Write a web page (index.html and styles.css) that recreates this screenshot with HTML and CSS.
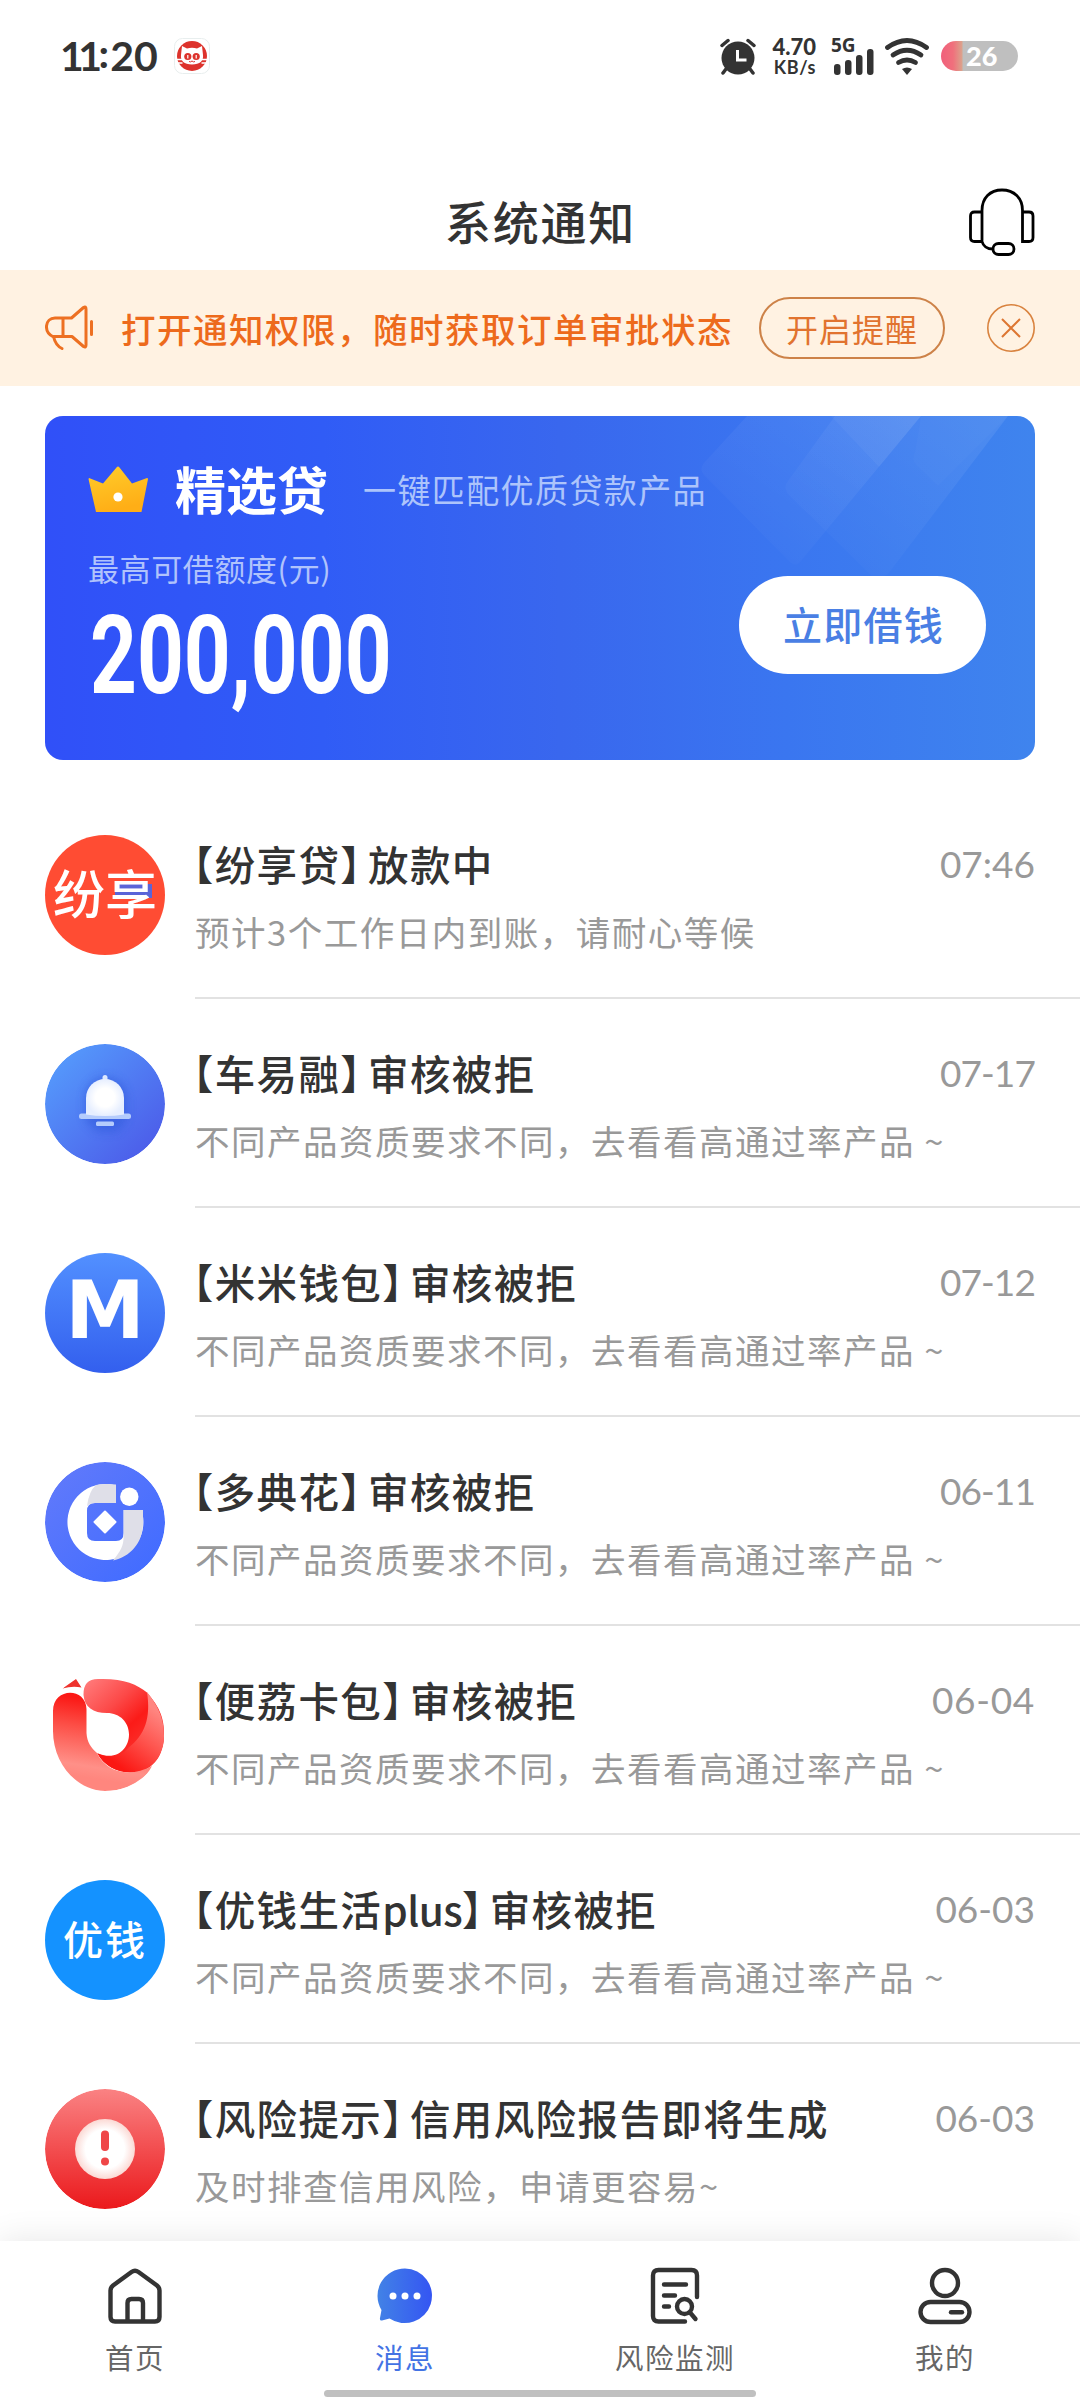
FILE: index.html
```html
<!DOCTYPE html>
<html lang="zh-CN">
<head>
<meta charset="utf-8">
<title>系统通知</title>
<link rel="stylesheet" href="styles.css">
</head>
<body>
<div class="screen">
  <header class="status">
    <div class="clock"><span class="ones">11</span><span class="colon">:</span>20</div>
    <svg class="app-badge" width="36" height="36" viewBox="0 0 36 36">
      <rect x=".5" y=".5" width="35" height="35" rx="8" fill="#fff" stroke="#e8eeee"/>
      <circle cx="18" cy="18" r="15" fill="#dd332c"/>
      <path d="M8 8l5 2.500q5-1.500 10 0L28 8l1 9q1 9-11 9.500Q6 26 7 17z" fill="#fff"/>
      <path d="M2 21.500h6M2.500 25h6M28 21.500h6M27.500 25h6" stroke="#fff" stroke-width="1.600"/>
      <circle cx="13.800" cy="18.500" r="3.600" fill="#dd332c"/><circle cx="22.200" cy="18.500" r="3.600" fill="#dd332c"/>
      <path d="M13.800 17v3.500M22.200 17v3.500" stroke="#fff" stroke-width="1.200"/>
      <path d="M15 23.500q1.500 1 3-.5 1.500 1.500 3 .5" fill="none" stroke="#dd332c"/>
    </svg>
    <div class="status-right">
      <svg width="36" height="37" viewBox="0 0 36 37">
        <circle cx="18" cy="20" r="16.500" fill="#333"/>
        <path d="M2 7.500l6-5M34 7.500l-6-5M6 31l-3 4M30 31l3 4" stroke="#333" stroke-width="3.500" stroke-linecap="round"/>
        <path d="M17.500 12v10h9" fill="none" stroke="#fff" stroke-width="3"/>
      </svg>
      <div class="speed"><b>4.70</b><span>KB/s</span></div>
      <div class="signal">
        <span>5G</span>
        <svg width="42" height="26" viewBox="0 0 42 26">
          <g fill="#333"><rect x="1" y="15" width="6.500" height="11" rx="3"/><rect x="12" y="11" width="6.500" height="15" rx="3"/><rect x="23" y="6" width="6.500" height="20" rx="3"/><rect x="34" y="0" width="6.500" height="26" rx="3"/></g>
        </svg>
      </div>
      <svg class="wifi" width="44" height="37" viewBox="0 0 44 37">
        <g fill="none" stroke="#333" stroke-width="4.800" stroke-linecap="round"><path d="M2.500 9.500Q22-4.500 41.500 9.500"/><path d="M8 17Q22 7.500 36 17"/><path d="M13.500 24.500Q22 19.500 30.500 24.500"/></g>
        <path d="M17 31q5-3 10 0l-5 6z" fill="#333"/>
      </svg>
      <div class="battery">26</div>
    </div>
  </header>

  <div class="titlebar">
    <h1>系统通知</h1>
    <svg class="headset" width="68" height="68" viewBox="0 0 68 68">
      <g fill="none" stroke="#000" stroke-width="2.800">
        <path d="M14 52.500V22.500C14 10 22 2 34 2s20.500 8 20.500 20.500v31H61q4 0 4-4V28q0-4-4-4h-6.500"/>
        <path d="M14 24H6.500q-4 0-4 4v21.500q0 4 4 4H14c1 4 5 7.500 11 7.500"/>
        <rect x="25" y="55.500" width="21" height="11" rx="5.500"/>
      </g>
    </svg>
  </div>

  <div class="notice">
    <svg width="50" height="48" viewBox="0 0 50 48">
      <path d="M8.500 33C-2 28 0 14 10 14h16.500L38.500 3.500Q41 2 41 5v36q0 3-2.500 1.500L27 32.500H8.500q2 9 8.500 12M18 14v18.500M46.500 17.500v13" fill="none" stroke="#ed7022" stroke-width="3" stroke-linecap="round" stroke-linejoin="round"/>
    </svg>
    <p>打开通知权限，随时获取订单审批状态</p>
    <button class="remind">开启提醒</button>
    <svg class="close" width="48" height="48" viewBox="0 0 48 48">
      <circle cx="24" cy="24" r="23.200" fill="none" stroke="#d9833f" stroke-width="1.600"/>
      <path d="M15 15l18 18M33 15L15 33" stroke="#dd7632" stroke-width="2"/>
    </svg>
  </div>

  <section class="card">
    <svg class="card-bg" width="990" height="344" viewBox="0 0 990 344">
      <defs>
        <linearGradient id="ray" x1="1" y1="0" x2="0" y2="1"><stop offset="0" stop-color="#fff" stop-opacity=".08"/><stop offset="1" stop-color="#fff" stop-opacity="0"/></linearGradient>
      </defs>
      <path d="M702 0h174L755 146q-4 5-10 0l-84-85q-8-7-2-14z" fill="url(#ray)"/>
      <path d="M790 0h173L843 158l-12 6-86-84q-8-8-2-15z" fill="url(#ray)"/>
      <path d="M786 0h90l-42 51z" fill="#fff" opacity=".04"/>
      <path d="M876 0h87l-70 70-22-21q-5-6-1-13z" fill="#fff" opacity=".02"/>
    </svg>
    <div class="card-head">
      <svg width="60" height="46" viewBox="0 0 60 46">
        <defs><linearGradient id="gold" x1="0" y1="0" x2=".3" y2="1"><stop offset="0" stop-color="#ffcd2b"/><stop offset="1" stop-color="#ffae16"/></linearGradient></defs>
        <path d="M1 12l14 5.500L28.500 1.500q1.500-2 3 0L44 17.500 59 12q1 0 1 1l-6.500 33H8L.5 13z" fill="url(#gold)"/>
        <circle cx="30" cy="31" r="4.600" fill="#fff"/>
      </svg>
      <h2>精选贷</h2>
      <span>一键匹配优质贷款产品</span>
    </div>
    <div class="card-body">
      <div class="quota"><p>最高可借额度(元)</p><strong>200,000</strong></div>
      <button class="borrow">立即借钱</button>
    </div>
  </section>

  <ul class="list">
    <li>
      <div class="avatar fenxiang"><i></i><span>纷享</span></div>
      <div class="msg"><div class="line"><h3>【纷享贷<em>】</em>放款中</h3><time>07:46</time></div><p>预计3个工作日内到账，请耐心等候</p></div>
    </li>
    <li>
      <svg class="avatar" viewBox="0 0 120 120">
        <defs>
          <linearGradient id="bellbg" x1=".1" y1=".1" x2=".9" y2=".9"><stop offset="0" stop-color="#559afc"/><stop offset="1" stop-color="#4c5ce9"/></linearGradient>
          <radialGradient id="bell"><stop offset=".5" stop-color="#fff"/><stop offset="1" stop-color="#e6eeff"/></radialGradient>
          <filter id="soft" x="-50%" y="-50%" width="200%" height="200%"><feGaussianBlur stdDeviation="4"/></filter>
        </defs>
        <circle cx="60" cy="60" r="60" fill="url(#bellbg)"/>
        <path d="M40 76V54a21 21 0 0 1 42 0v22l-10 12H52z" fill="#315cdc" opacity=".6" filter="url(#soft)"/>
        <rect x="57.500" y="31" width="5" height="9" rx="2.500" fill="#dce8ff"/>
        <rect x="34" y="69.500" width="52" height="5.500" rx="2.500" fill="#b5ccfc"/>
        <path d="M41 70.500V54a19 19 0 0 1 38 0v16.500q-19 3-38 0z" fill="url(#bell)"/>
        <rect x="51" y="77.500" width="18" height="4.500" rx="1.500" fill="#b5ccfc"/>
      </svg>
      <div class="msg"><div class="line"><h3>【车易融<em>】</em>审核被拒</h3><time class="narrow">07-17</time></div><p>不同产品资质要求不同，去看看高通过率产品 ~</p></div>
    </li>
    <li>
      <div class="avatar mimi">M</div>
      <div class="msg"><div class="line"><h3>【米米钱包<em>】</em>审核被拒</h3><time class="narrow">07-12</time></div><p>不同产品资质要求不同，去看看高通过率产品 ~</p></div>
    </li>
    <li>
      <svg class="avatar" viewBox="0 0 120 120">
        <defs><linearGradient id="dian" x1=".1" y1=".1" x2=".9" y2=".9"><stop offset="0" stop-color="#5f79fb"/><stop offset="1" stop-color="#426cff"/></linearGradient></defs>
        <circle cx="60" cy="60" r="60" fill="url(#dian)"/>
        <path d="M71 23.500V41H50q-8 0-8 8v22q0 8 8 8h21q7.600 0 7.600-8V48H96.500A38 38 0 1 1 71 23.500z" fill="#fff"/>
        <path d="M71 22.500V41H50q-5 0-8 3 2-15 9-21 8-1.500 20-.5z" fill="#dfdfe8"/>
        <path d="M78.600 48H98v13c0 20-13 34-30 37.500 8-10 10.600-15 10.600-24z" fill="#dfdfe8"/>
        <circle cx="84.300" cy="34.700" r="9.200" fill="#fff"/>
        <path d="M60 49.500L70.500 60 60 70.500 49.500 60z" fill="#fff" stroke="#fff" stroke-width="2" stroke-linejoin="round"/>
      </svg>
      <div class="msg"><div class="line"><h3>【多典花<em>】</em>审核被拒</h3><time class="narrow">06-11</time></div><p>不同产品资质要求不同，去看看高通过率产品 ~</p></div>
    </li>
    <li>
      <svg class="avatar" viewBox="0 0 120 120">
        <defs>
          <linearGradient id="li1" gradientUnits="userSpaceOnUse" x1="45" y1="10" x2="95" y2="65"><stop offset="0" stop-color="#ff7777"/><stop offset=".45" stop-color="#fc4948"/><stop offset=".8" stop-color="#fb1b18"/><stop offset="1" stop-color="#fb2824"/></linearGradient>
          <linearGradient id="li2" gradientUnits="userSpaceOnUse" x1="42" y1="28" x2="30" y2="105"><stop offset="0" stop-color="#fb1815"/><stop offset=".35" stop-color="#fc4d45"/><stop offset=".85" stop-color="#ff9088"/><stop offset="1" stop-color="#ff867e"/></linearGradient>
          <linearGradient id="li3" gradientUnits="userSpaceOnUse" x1="118" y1="45" x2="78" y2="98"><stop offset="0" stop-color="#ff8580"/><stop offset=".45" stop-color="#fe5650"/><stop offset="1" stop-color="#fb1713"/></linearGradient>
        </defs>
        <path d="M17.500 17.500L31 8l5.500 8.500q-9-2-19 1z" fill="#ee332e"/>
        <path d="M38.500 24Q38 8 53 8c24-1 39 5 49 13.500 10 12 18 23 17 44 0 20-14 36-31 36-16 1-30-8-35-19 20 8 31-6 31-19 0-12-9-21.500-22-21.500C48 42 39.500 36 38.500 24z" fill="url(#li1)"/>
        <path d="M102 21c10 13 17 24 17 44 0 13-4 22-12 29-14 12-43 10-55-12 10 6 24 4 31-5 17-13 23-30 19-56z" fill="url(#li3)"/>
        <path d="M8 40c0-24 33-24 33.500-2v24c.5 9 4.500 15 10.500 20 8 18 32 26 55 13-8 16-26 25-47 25C30 119 8 91 8 60z" fill="url(#li2)"/>
      </svg>
      <div class="msg"><div class="line"><h3>【便荔卡包<em>】</em>审核被拒</h3><time class="wide">06-04</time></div><p>不同产品资质要求不同，去看看高通过率产品 ~</p></div>
    </li>
    <li>
      <div class="avatar youqian">优钱</div>
      <div class="msg"><div class="line"><h3>【优钱生活<b>plus</b><em>】</em>审核被拒</h3><time>06-03</time></div><p>不同产品资质要求不同，去看看高通过率产品 ~</p></div>
    </li>
    <li>
      <svg class="avatar" viewBox="0 0 120 120">
        <defs>
          <linearGradient id="risk" x1="0" y1="0" x2="0" y2="1"><stop offset="0" stop-color="#fa8283"/><stop offset="1" stop-color="#eb191c"/></linearGradient>
          <radialGradient id="disc"><stop offset=".65" stop-color="#fff"/><stop offset="1" stop-color="#fbd9d4"/></radialGradient>
        </defs>
        <circle cx="60" cy="60" r="60" fill="url(#risk)"/>
        <circle cx="60" cy="60" r="30" fill="url(#disc)"/>
        <rect x="56" y="41.500" width="8" height="20.500" rx="4" fill="#ef4648"/>
        <circle cx="60" cy="72.400" r="4" fill="#ef4648"/>
      </svg>
      <div class="msg"><div class="line"><h3>【风险提示<em>】</em>信用风险报告即将生成</h3><time>06-03</time></div><p>及时排查信用风险，申请更容易~</p></div>
    </li>
  </ul>

  <nav class="tabs">
    <div class="tab">
      <svg width="60" height="60" viewBox="0 0 60 60"><g fill="none" stroke="#333" stroke-width="4.400" stroke-linejoin="round"><path d="M5.500 24.500q0-3 2.500-5L26.500 6q3.500-2.500 7 0L52 19.500q2.500 2 2.500 5V51q0 4.500-4.500 4.500H10q-4.500 0-4.500-4.500z"/><path d="M22.500 55V37q0-4 4-4h7.500q4 0 4 4v18"/></g></svg>
      <span>首页</span>
    </div>
    <div class="tab active">
      <svg width="60" height="60" viewBox="0 0 60 60"><defs><linearGradient id="chat"><stop offset="0" stop-color="#4282e6"/><stop offset="1" stop-color="#3455f3"/></linearGradient></defs><path d="M30 2.500a27.300 27.300 0 1 1-15.500 50l-7.500 2q-2.500.5-2-2.500L6.500 44A27.300 27.300 0 0 1 30 2.500z" fill="url(#chat)"/><g fill="#fff"><circle cx="18" cy="30" r="3.500"/><circle cx="30" cy="30" r="3.500"/><circle cx="42" cy="30" r="3.500"/></g></svg>
      <span>消息</span>
    </div>
    <div class="tab">
      <svg width="60" height="60" viewBox="0 0 60 60"><g fill="none" stroke="#333" stroke-width="4.400" stroke-linecap="round"><path d="M40 55.500H13.500q-5.500 0-5.500-5.500V9.500Q8 4 13.500 4h33Q52 4 52 9.500V31M19 18.500h22M19 29.500h11M19 40.500h5"/><circle cx="39.500" cy="40.500" r="7.500"/><path d="M45 46.500l5.500 6.500"/></g></svg>
      <span>风险监测</span>
    </div>
    <div class="tab">
      <svg width="60" height="60" viewBox="0 0 60 60"><g fill="none" stroke="#333" stroke-width="4.400"><circle cx="30" cy="17" r="13"/><rect x="5.500" y="36" width="49" height="20" rx="10"/><path d="M36 46.200h11" stroke-linecap="round"/></g></svg>
      <span>我的</span>
    </div>
  </nav>
  <div class="gesture"></div>
</div>
</body>
</html>
```
FILE: styles.css
```css
* { box-sizing: border-box; margin: 0; padding: 0; }
body {
  background: #fff;
  font-family: "Noto Sans CJK SC", sans-serif;
  color: #333;
}
.screen {
  position: relative;
  width: 1080px;
  height: 2400px;
  overflow: hidden;
  display: flex;
  flex-direction: column;
  background: #fff;
}
svg { display: block; flex: none; }
button { font-family: inherit; background: none; border: 0; white-space: nowrap; }

/* status bar */
.status {
  height: 112px;
  padding: 0 62px 0 60px;
  display: flex;
  align-items: center;
}
.clock { font: 700 41px/60px Lato, sans-serif; white-space: nowrap; width: 114px; }
.ones { letter-spacing: -5.500px; }
.colon { position: relative; top: -3px; margin: 0 1px 0 2px; }
.status-right { margin-left: auto; display: flex; align-items: center; color: #333; }
.speed {
  width: 48px;
  margin-left: 12px;
  display: flex;
  flex-direction: column;
  align-items: flex-end;
  font: 700 18px/18px Lato, sans-serif;
  letter-spacing: .6px;
}
.speed b { font-size: 22px; font-weight: 900; line-height: 22px; letter-spacing: 0; }
.signal { width: 42px; margin-left: 17px; height: 37px; position: relative; display: flex; align-items: flex-end; }
.signal span { position: absolute; left: -2px; top: -3px; font: 700 19px/20px "Noto Sans", sans-serif; }
.wifi { margin-left: 10px; }
.battery {
  width: 77px;
  height: 30px;
  margin-left: 12px;
  border-radius: 15px;
  background: linear-gradient(90deg, #f0607c 0, #f0707c 12px, #dba28c 21px, #bfbfbf 22px);
  color: #fff;
  font: 900 27px/30px Lato, sans-serif;
  padding-left: 25px;
}

/* title */
.titlebar {
  height: 158px;
  padding: 0 44px 0 45px;
  display: grid;
  grid-template-columns: 68px 1fr 68px;
  align-items: end;
}
.titlebar h1 {
  grid-column: 2;
  text-align: center;
  font-size: 46px;
  font-weight: 500;
  line-height: 60px;
  letter-spacing: 1.700px;
  padding-bottom: 20px;
}
.headset { margin-bottom: 14px; }

/* permission notice */
.notice {
  height: 116px;
  padding: 0 45px;
  display: flex;
  align-items: center;
  background: #fff2e2;
  color: #ed6a1c;
}
.notice p { width: 614px; margin-left: 26px; font-size: 34.500px; font-weight: 500; letter-spacing: 1.500px; white-space: nowrap; line-height: 50px; }
.remind {
  width: 186px;
  height: 62px;
  margin-left: 24px;
  border: 2px solid #cd8248;
  border-radius: 31px;
  color: #e1732f;
  font-size: 32px;
  letter-spacing: 1px;
  line-height: 56px;
}
.close { margin-left: auto; }

/* promo card */
.card {
  position: relative;
  height: 344px;
  margin: 30px 45px 0;
  padding: 40px 49px 0 43px;
  border-radius: 18px;
  overflow: hidden;
  background: linear-gradient(90deg, #3050f8 0%, #305cf6 28%, #3967ee 52%, #3a76f0 75%, #3f84ee 100%);
  color: #fff;
}
.card-bg { position: absolute; left: 0; top: 0; }
.card-head { position: relative; height: 66px; display: flex; align-items: center; }
.card-head h2 { font-size: 51px; font-weight: 700; line-height: 66px; margin-left: 27px; padding-bottom: 3px; }
.card-head span { margin-left: 35px; font-size: 33px; letter-spacing: 1.400px; color: #adc4fb; line-height: 50px; }
.card-body { position: relative; display: flex; justify-content: space-between; }
.quota p { font-size: 31px; letter-spacing: .6px; line-height: 44px; margin-top: 24px; color: #b0c3fc; }
.quota strong {
  display: block;
  font: 700 109px/100px Roboto, sans-serif;
  transform: scaleX(.75);
  transform-origin: left;
  width: 300px;
  margin: 16px 0 0 2px;
}
.borrow {
  width: 247px;
  height: 98px;
  margin-top: 54px;
  border-radius: 49px;
  background: #fff;
  color: #4a7fe4;
  font-size: 39px;
  font-weight: 500;
  letter-spacing: 1.200px;
  padding: 0 0 5px 2px;
}

/* message list */
.list { list-style: none; padding-top: 30px; }
.list li { height: 209px; padding-left: 45px; display: flex; gap: 30px; }
.avatar { width: 120px; height: 120px; margin-top: 45px; border-radius: 50%; flex: none; color: #fff; text-align: center; white-space: nowrap; }
.msg { flex: 1; padding: 46px 45px 0 0; border-bottom: 2px solid #e2e2e2; }
.list li:last-child .msg { border: 0; }
.line { display: flex; justify-content: space-between; align-items: center; height: 56px; }
.line h3 { font-size: 40.500px; font-weight: 500; line-height: 56px; letter-spacing: 1.400px; margin-left: -2px; font-feature-settings: "halt"; white-space: nowrap; }
.line em { font-style: normal; margin-right: 6px; }
.line b { font-weight: 500; letter-spacing: -.6px; }
.line time { font: 400 37px/56px Lato, sans-serif; color: #999; }
.line .narrow { letter-spacing: -.9px; }
.line .wide { letter-spacing: .7px; }
.msg p { font-size: 34.500px; letter-spacing: 1.500px; line-height: 50px; margin-top: 14px; color: #999; white-space: nowrap; }

.fenxiang { position: relative; background: #ff4c33; font-size: 52px; font-weight: 500; line-height: 114px; }
.fenxiang span { position: relative; }
.fenxiang i { position: absolute; left: 70px; top: 49px; width: 37px; height: 14px; background: #5a64d8; }
.mimi { background: linear-gradient(#5290ff, #335fee); font: 700 80px/116px "DejaVu Sans", sans-serif; display: flex; justify-content: center; }
.youqian { background: #1492ff; font-size: 40px; font-weight: 500; line-height: 117px; letter-spacing: 2px; }

/* bottom tabs */
.tabs {
  position: absolute;
  left: 0;
  right: 0;
  bottom: 0;
  height: 159px;
  background: #fff;
  box-shadow: 0 0 32px rgba(0, 0, 0, .1);
  display: flex;
}
.tab { flex: 1; display: flex; flex-direction: column; align-items: center; padding-top: 25px; color: #666; font-size: 28.500px; letter-spacing: 1.500px; line-height: 40px; }
.tab span { margin-top: 11px; }
.tab.active { color: #4373e4; }
.gesture { position: absolute; left: 324px; bottom: 3px; width: 432px; height: 7px; border-radius: 4px; background: #c0c0c0; }
```
